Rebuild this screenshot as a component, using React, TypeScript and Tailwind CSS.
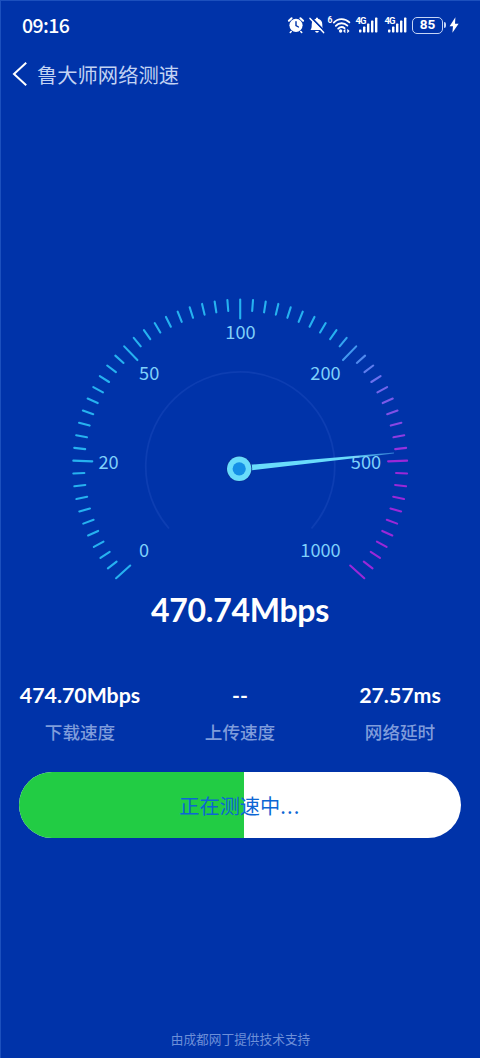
const CX = 240.2;
const CY = 466.5;
const STEP = 4.4;

const labels = [
  { text: '0', x: 144, y: 557 },
  { text: '20', x: 108.5, y: 468.5 },
  { text: '50', x: 149.2, y: 379.5 },
  { text: '100', x: 240.5, y: 339 },
  { text: '200', x: 325.5, y: 379.5 },
  { text: '500', x: 366, y: 468.5 },
  { text: '1000', x: 320.5, y: 557 },
];

const stats = [
  { value: '474.70Mbps', label: '下载速度' },
  { value: '--', label: '上传速度' },
  { value: '27.57ms', label: '网络延时' },
];

function mix(a: number[], b: number[], t: number) {
  return `rgb(${a.map((v, i) => Math.round(v + (b[i] - v) * t)).join(',')})`;
}

// cyan up to 200, then fades through periwinkle into purple
function tickColor(i: number) {
  if (i <= 38) return 'rgb(38,178,240)';
  if (i <= 43) return mix([38, 178, 240], [108, 112, 238], (i - 38) / 5);
  if (i <= 49) return mix([108, 112, 238], [150, 50, 222], (i - 43) / 6);
  return 'rgb(154,40,216)';
}

function Ticks() {
  return (
    <g strokeWidth="2.1" strokeLinecap="round">
      {Array.from({ length: 61 }, (_, i) => (
        <line
          key={i}
          x1={CX}
          x2={CX}
          y1={CY - 167}
          y2={CY - (i % 10 === 0 ? 148 : 156)}
          stroke={tickColor(i)}
          transform={`rotate(${(i - 30) * STEP} ${CX} ${CY})`}
        />
      ))}
    </g>
  );
}

function Gauge() {
  return (
    <svg className="block h-[300px] w-full shrink-0" viewBox="0 290 480 300">
      <defs>
        <linearGradient id="needle" gradientUnits="userSpaceOnUse" x1="251" y1="467" x2="394" y2="453">
          <stop offset="0" stopColor="#69dcfb" />
          <stop offset="0.7" stopColor="#69dcfb" />
          <stop offset="1" stopColor="#4fa9ee" stopOpacity="0.6" />
        </linearGradient>
      </defs>
      <path d="M169 528.5A94.5 94.5 0 1 1 311.5 528.5" fill="none" stroke="#0d3eb2" strokeWidth="1.8" />
      <Ticks />
      <path d="M250 464.8L394 452.6V453.5L250 470.5Z" fill="url(#needle)" />
      <circle cx="239.2" cy="468.8" r="13" fill="#0a2f93" />
      <circle cx="239.2" cy="468.8" r="12.2" fill="#69dcfb" />
      <circle cx="239.2" cy="468.8" r="6.6" fill="#1590e6" />
      <g fill="#7fd0fa" fontSize="18.2" textAnchor="middle" fontFamily="'Noto Sans CJK SC', sans-serif">
        {labels.map((l) => (
          <text key={l.text} x={l.x} y={l.y}>
            {l.text}
          </text>
        ))}
      </g>
    </svg>
  );
}

function Signal() {
  return (
    <svg className="h-5 w-6" viewBox="0 0 24 20" fill="white">
      <text x="0.5" y="8.6" fontSize="9.5" fontWeight="700" fontFamily="Roboto, sans-serif" textLength="11">
        4G
      </text>
      <rect x="4" y="14.5" width="2.4" height="3" rx="0.7" />
      <rect x="8" y="11.5" width="2.4" height="6" rx="0.7" />
      <rect x="12" y="8.5" width="2.4" height="9" rx="0.7" />
      <rect x="16" y="5.5" width="2.4" height="12" rx="0.7" />
      <rect x="20" y="2.5" width="2.4" height="15" rx="0.7" />
    </svg>
  );
}

function StatusIcons() {
  return (
    <div className="flex h-5 items-center">
      <svg className="h-5 w-5" viewBox="0 0 20 20" fill="none" stroke="white" strokeLinecap="round">
        <circle cx="10" cy="10.3" r="6.6" fill="white" stroke="none" />
        <path d="M2.9 5.8L5.6 3.3M17.1 5.8L14.4 3.3" strokeWidth="2" />
        <path d="M5.2 16.5L4.3 17.5M14.8 16.5L15.7 17.5" strokeWidth="1.6" />
        <path d="M10 6.6V10.6L12.5 12" stroke="#0033a9" strokeWidth="1.4" />
      </svg>
      <svg className="ml-0.5 h-5 w-[18px]" viewBox="0 0 18 20" fill="white">
        <path d="M2.4 15C3.6 13.5 3.7 12.5 3.7 9.5C3.7 6.3 5.4 4.3 8 3.8V3Q9 1.8 10 3V3.8C12.8 4.4 14.3 6.3 14.3 9.5C14.3 12.5 14.5 13.5 15.7 15Z" />
        <path d="M7 16H11Q10.5 17.8 9 17.8T7 16Z" />
        <path d="M3.1 2.4L16.9 16.6" stroke="#0033a9" strokeWidth="2" />
        <path d="M2 3.4L15.6 17.6" stroke="white" strokeWidth="1.5" strokeLinecap="round" />
      </svg>
      <svg className="ml-px h-5 w-6" viewBox="0 0 24 20" fill="none" stroke="white" strokeWidth="1.8" strokeLinecap="round">
        <text x="0.6" y="8" fontSize="8.5" fontWeight="700" fontFamily="Roboto, sans-serif" fill="white" stroke="none">
          6
        </text>
        <path d="M6.8 7.6C11 2.9 18 2.9 22.4 7.4M8.8 10.9C12 7.4 17 7.4 20.4 10.6M11.2 13.7C13.2 11.8 15.8 11.8 17.6 13.2" />
        <circle cx="13.6" cy="16" r="1.7" fill="white" stroke="none" />
        <path d="M18 15L17 16L18 17M20.6 15L21.6 16L20.6 17" strokeWidth="1.3" />
      </svg>
      <div className="ml-1 flex gap-[5px]">
        <Signal />
        <Signal />
      </div>
      <div className="ml-1 flex h-[17px] w-[31px] items-center justify-center rounded-[5px] border-[1.5px] border-[#c5d5f5] font-['Roboto',sans-serif] text-[13.5px] leading-none font-bold">
        85
      </div>
      <div className="ml-px h-1.5 w-0.5 rounded-r-sm bg-[#c5d5f5]" />
      <svg className="ml-[3px] h-5 w-2.5" viewBox="0 0 10 20" fill="white">
        <path d="M6.4 2.3L0.6 11.2H4L3.4 17.7L9.6 8.7H6Z" />
      </svg>
    </div>
  );
}

export default function App() {
  return (
    <div className="flex h-[1058px] w-[480px] flex-col overflow-hidden border-t border-l border-[#1c50bd] bg-[#0033a9] font-['Lato','Noto_Sans_CJK_SC',sans-serif] text-white">
      <header className="flex h-12 shrink-0 items-center justify-between pr-[21px] pl-[21px]">
        <span className="font-['Noto_Sans_CJK_SC',sans-serif] text-[19.5px] leading-none font-medium tracking-[-0.6px]">09:16</span>
        <StatusIcons />
      </header>

      <nav className="flex h-[50px] shrink-0 items-center pl-[11px]">
        <svg className="h-6 w-4" viewBox="0 0 16 24" fill="none" stroke="white" strokeWidth="2">
          <path d="M14.2 0.8L2 12L14.2 23.2" />
        </svg>
        <h1 className="ml-[9px] font-['Noto_Sans_CJK_SC',sans-serif] text-[20.3px] leading-none text-[#c3d3f3]">鲁大师网络测速</h1>
      </nav>

      <main className="-ml-px flex flex-col pt-[191px]">
        <Gauge />
        <div className="flex h-10 items-center justify-center text-[32px] leading-none font-bold tracking-[-0.3px]">470.74Mbps</div>

        <div className="mt-[49px] grid grid-cols-3 text-center">
          {stats.map((s) => (
            <div key={s.label} className="flex flex-col items-center">
              <div className="h-8 text-[21.3px] leading-8 font-bold">{s.value}</div>
              <div className="mt-2.5 text-[17.6px] leading-6 font-medium text-[#7f9cdb]">{s.label}</div>
            </div>
          ))}
        </div>

        <div className="relative mx-[19px] mt-[27px] flex h-[66px] items-center justify-center overflow-hidden rounded-full bg-white">
          <div className="absolute inset-y-0 left-0 w-[51%] bg-[#22cc44]" />
          <span className="relative pt-0.5 font-['Noto_Sans_CJK_SC',sans-serif] text-[20.2px] leading-6 text-[#0c66d4]">
            正在测速中<span className="tracking-[1.2px]">...</span>
          </span>
        </div>
      </main>

      <footer className="mt-auto pb-[11px] text-center text-[12.7px] leading-4 text-[#6d8fd8]">由成都网丁提供技术支持</footer>
    </div>
  );
}
